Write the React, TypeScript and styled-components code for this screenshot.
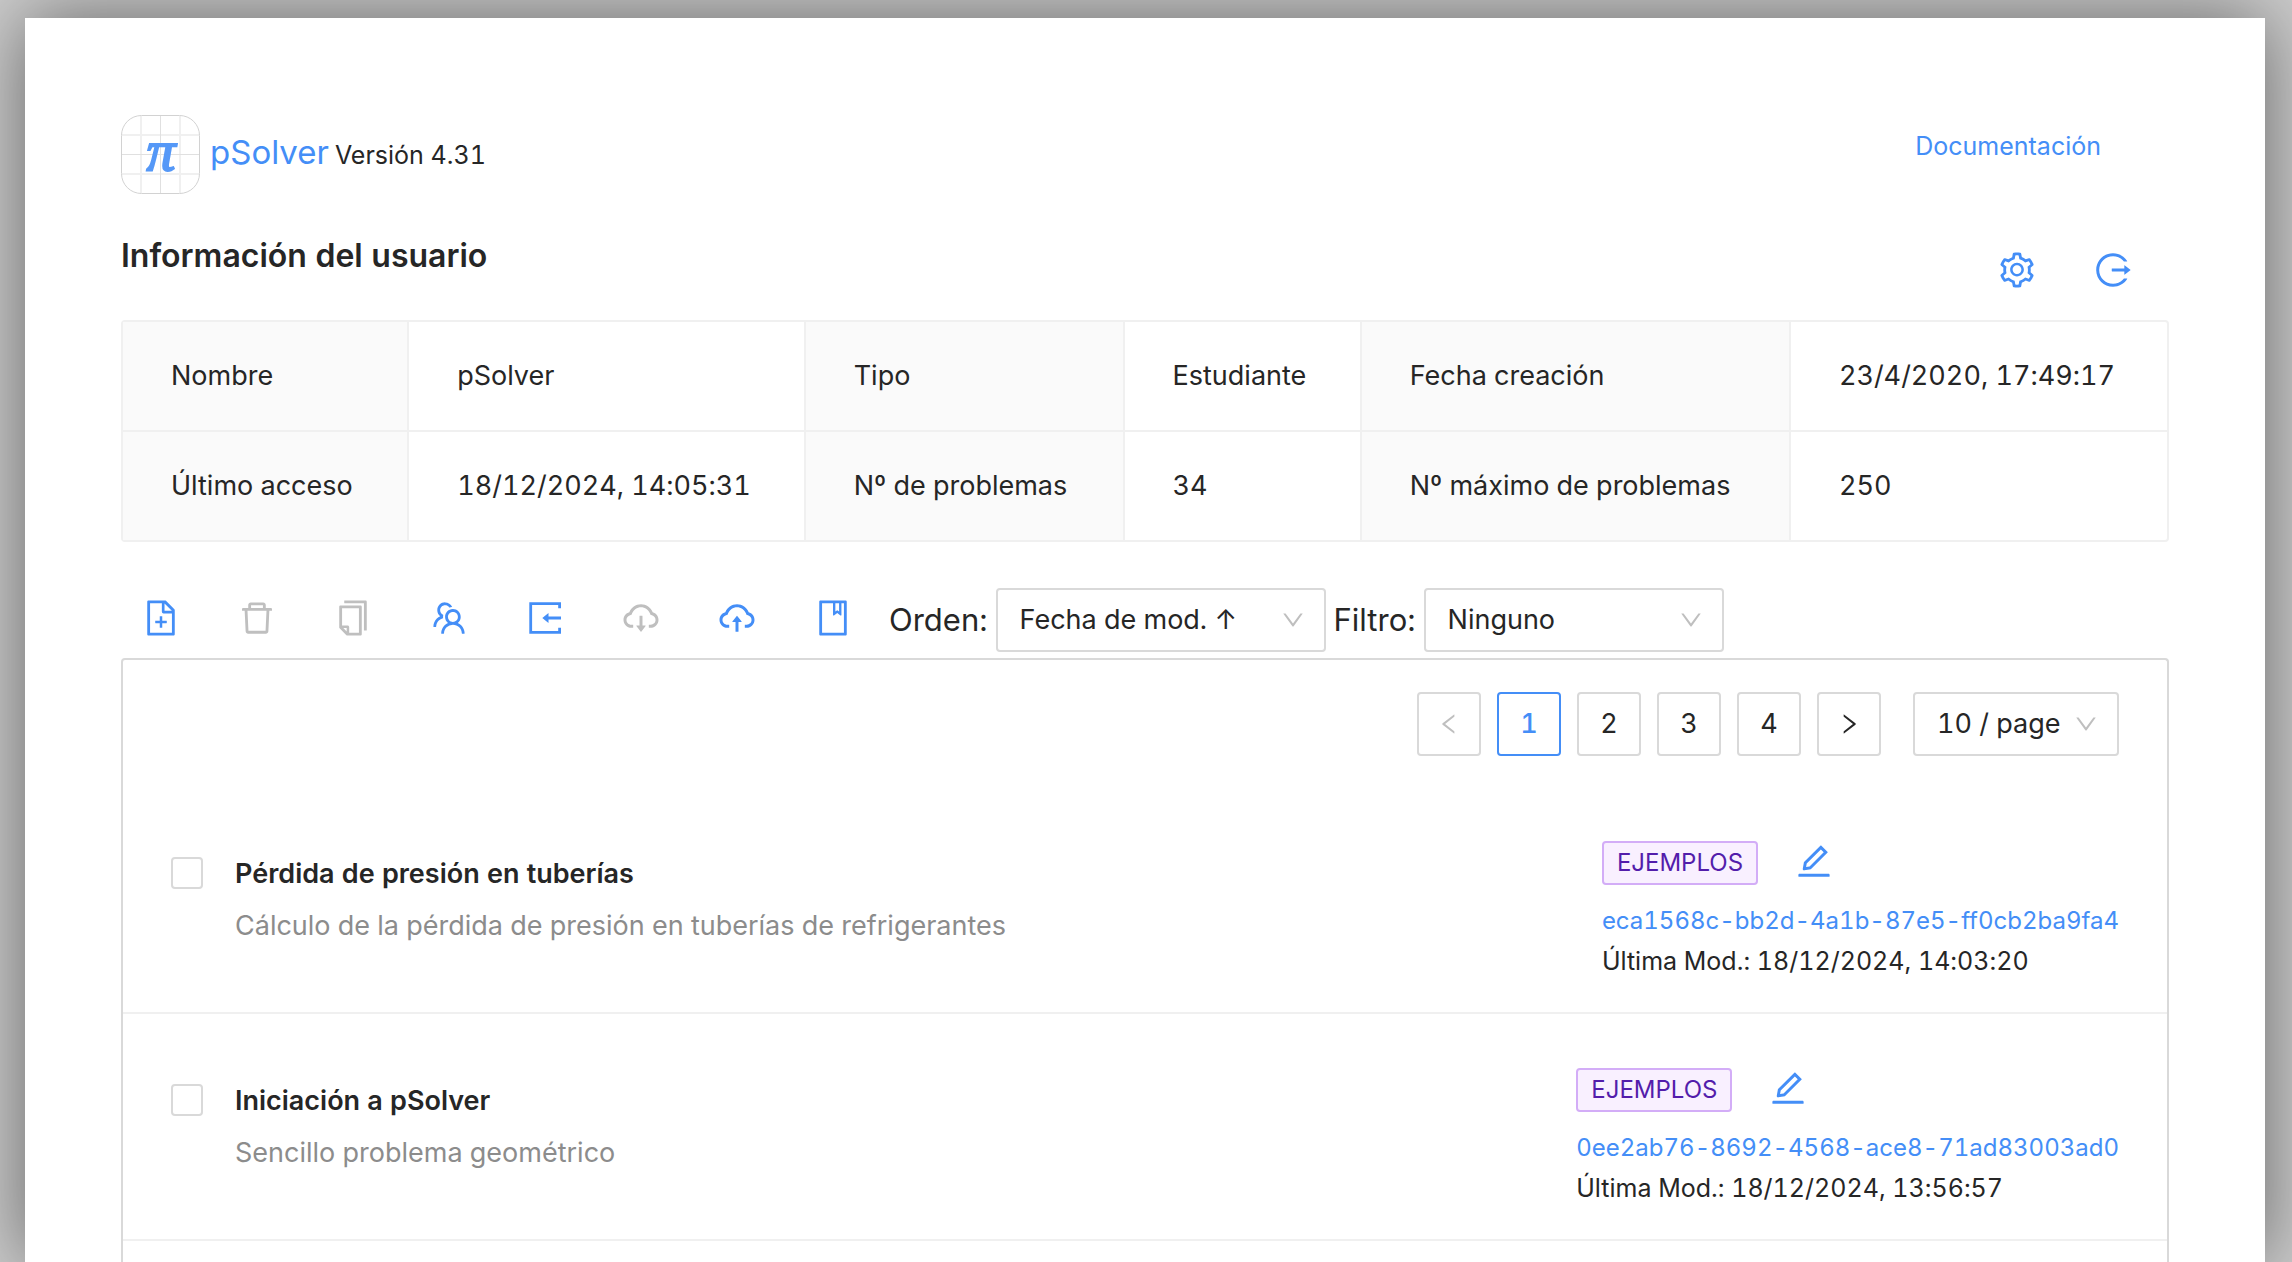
import React from "react";
import styled, { createGlobalStyle } from "styled-components";
import {
  AiOutlineBook,
  AiOutlineCloudDownload,
  AiOutlineCloudUpload,
  AiOutlineCopy,
  AiOutlineDelete,
  AiOutlineDown,
  AiOutlineEdit,
  AiOutlineFileAdd,
  AiOutlineLeft,
  AiOutlineLogout,
  AiOutlineRight,
  AiOutlineSetting,
  AiOutlineTeam,
} from "react-icons/ai";

const color = {
  primary: "#448ef7",
  text: "#262626",
  muted: "#8c8c8c",
  disabled: "#bfbfbf",
  border: "#d9d9d9",
  split: "#f0f0f0",
};

const GlobalStyle = createGlobalStyle`
  *, *::before, *::after { box-sizing: border-box; }
  body {
    margin: 0;
    background: #cccccc;
    color: ${color.text};
    font-family: Inter, "Liberation Sans", sans-serif;
    font-size: 27px;
    line-height: 44px;
    font-variant-numeric: tabular-nums;
    font-variant-ligatures: no-contextual;
  }
  button, input, select { font: inherit; color: inherit; }
`;

const Page = styled.div`
  display: flex;
  flex-direction: column;
  height: 100vh;
  padding: 18px 27px 0 25px;
  overflow: hidden;
`;

const Sheet = styled.main`
  display: flex;
  flex: 1;
  flex-direction: column;
  padding: 97px 96px 0;
  background: #ffffff;
  box-shadow: 0 0 72px rgba(0, 0, 0, 0.5);
`;

const Header = styled.header`
  display: flex;
  justify-content: space-between;
  align-items: flex-start;
  height: 79px;
`;

const Brand = styled.div`
  display: flex;
  align-items: center;
  gap: 10px;
`;

const BrandName = styled.div`
  display: flex;
  align-items: baseline;
  gap: 6px;
  padding-bottom: 2px;
  font-size: 25px;
`;

const BrandLink = styled.a`
  color: ${color.primary};
  font-size: 33px;
  text-decoration: none;
`;

const DocsLink = styled.a`
  margin: 9px 68px 0 0;
  color: ${color.primary};
  font-size: 25px;
  text-decoration: none;
`;

const TitleBar = styled.div`
  display: flex;
  justify-content: space-between;
  align-items: flex-start;
  margin-top: 38px;
  height: 88px;
`;

const Title = styled.h1`
  margin: 0;
  font-size: 32px;
  line-height: 48px;
  font-weight: 600;
`;

const AccountActions = styled.div`
  display: flex;
  gap: 56px;
  padding: 18px 36px 0 0;
`;

const IconButton = styled.button`
  display: flex;
  padding: 0;
  border: 0;
  background: none;
  color: ${color.primary};
  font-size: 40px;
  line-height: 1;
  cursor: pointer;

  &:disabled {
    color: ${color.disabled};
    cursor: not-allowed;
  }
`;

const InfoTable = styled.table`
  width: 100%;
  border: 2px solid ${color.split};
  border-radius: 4px;
  border-spacing: 0;
  table-layout: fixed;

  tr + tr > * { border-top: 2px solid ${color.split}; }
`;

const Col = styled.col<{ $share: number }>`
  width: ${(p) => p.$share}%;
`;

const LabelCell = styled.th`
  box-sizing: content-box;
  height: 108px;
  padding: 0 0 0 48px;
  border-right: 2px solid ${color.split};
  background: #fafafa;
  font-weight: 400;
  text-align: left;
  white-space: nowrap;
`;

const ValueCell = styled.td`
  padding: 0 0 0 48px;
  border-right: 2px solid ${color.split};
  white-space: nowrap;

  &:last-child { border-right: 0; }
`;

const Toolbar = styled.div`
  display: flex;
  align-items: center;
  margin-top: 46px;
  padding-left: 20px;
`;

const ToolGroup = styled.div`
  display: flex;
  gap: 56px;
  margin: 0 36px 4px 0;
`;

const ToolLabel = styled.label`
  margin-right: 8px;
  font-size: 31px;
`;

const SelectBox = styled.div<{ $width: number }>`
  position: relative;
  width: ${(p) => p.$width}px;

  select {
    display: block;
    width: 100%;
    height: 64px;
    padding: 0 22px;
    border: 2px solid ${color.border};
    border-radius: 4px;
    background: #ffffff;
    appearance: none;
  }

  svg {
    position: absolute;
    top: 19px;
    right: 20px;
    color: ${color.disabled};
    font-size: 26px;
    pointer-events: none;
  }

  & + label { margin-left: 8px; }
`;

const Panel = styled.section`
  flex: 1;
  margin-top: 6px;
  border: 2px solid ${color.border};
  border-bottom: 0;
  border-radius: 4px 4px 0 0;
`;

const Pagination = styled.nav`
  display: flex;
  justify-content: flex-end;
  gap: 16px;
  padding: 32px 48px 31px;
`;

const PageButton = styled.button<{ $active?: boolean }>`
  display: flex;
  justify-content: center;
  align-items: center;
  width: 64px;
  height: 64px;
  padding: 0;
  border: 2px solid ${(p) => (p.$active ? color.primary : color.border)};
  border-radius: 4px;
  background: #ffffff;
  color: ${(p) => (p.$active ? color.primary : color.text)};
  font-weight: ${(p) => (p.$active ? 500 : 400)};
  cursor: pointer;

  &:disabled { color: ${color.disabled}; }
  svg { font-size: 26px; }
`;

const PageSize = styled.div`
  margin-left: 16px;
`;

const List = styled.ul`
  margin: 0;
  padding: 0;
  list-style: none;
`;

const Item = styled.li`
  display: flex;
  align-items: flex-start;
  gap: 32px;
  height: 227px;
  padding: 54px 48px 0;
  border-bottom: 2px solid ${color.split};
`;

const Checkbox = styled.input`
  flex: none;
  width: 32px;
  height: 32px;
  margin: 16px 0 0;
  border: 2px solid ${color.border};
  border-radius: 4px;
  background: #ffffff;
  appearance: none;

  &:checked { background: ${color.primary}; }
`;

const ItemText = styled.div`
  flex: 1;
  padding-top: 11px;
`;

const ItemTitle = styled.label`
  display: block;
  margin-bottom: 8px;
  font-weight: 600;
`;

const ItemDescription = styled.p`
  margin: 0;
  color: ${color.muted};
`;

const ItemMeta = styled.div`
  font-size: 25px;
  line-height: 40px;
`;

const TagRow = styled.div`
  display: flex;
  align-items: flex-start;
  gap: 36px;
  margin-bottom: 16px;
`;

const Tag = styled.span`
  height: 44px;
  padding: 0 13px;
  border: 2px solid #d3adf7;
  border-radius: 4px;
  background: #f9f0ff;
  color: #531dab;
  font-size: 24px;
`;

const IdLink = styled.a`
  display: block;
  color: ${color.primary};
  font-size: 24px;
  text-decoration: none;
`;

const Logo = () => (
  <svg width="79" height="79" viewBox="0 0 79 79" aria-hidden="true">
    <path d="M20 1v77M59 1v77M1 20h77M1 59h77" fill="none" stroke="#f0f0f0" strokeWidth="2" />
    <path d="M39.5 1v77M1 39.5h77" fill="none" stroke="#e0e0e0" />
    <rect x="0.5" y="0.5" width="78" height="78" rx="20" fill="none" stroke="#d2d2d2" />
    <text
      x="40"
      y="55"
      textAnchor="middle"
      fontFamily="Liberation Serif, serif"
      fontSize="58"
      fontStyle="italic"
      fill="#5598f7"
      stroke="#5598f7"
      strokeWidth="2"
    >
      π
    </text>
  </svg>
);

/* A frame open on its right side with an arrow pointing into it. */
const ImportIcon = () => (
  <svg width="1em" height="1em" viewBox="0 0 40 40" aria-hidden="true">
    <path
      d="M34.6 10.3V5.7H5.7v28.6h28.9v-4.6M36 20H22"
      fill="none"
      stroke="currentColor"
      strokeWidth="2.8"
    />
    <path d="M17.3 20l6.2-5v10z" fill="currentColor" />
  </svg>
);

const userInfo = [
  [
    ["Nombre", "pSolver"],
    ["Tipo", "Estudiante"],
    ["Fecha creación", "23/4/2020, 17:49:17"],
  ],
  [
    ["Último acceso", "18/12/2024, 14:05:31"],
    ["Nº de problemas", "34"],
    ["Nº máximo de problemas", "250"],
  ],
];

const columnShares = [14, 19.4, 15.6, 11.6, 21, 18.4];

const tools = [
  { label: "Nuevo", Icon: AiOutlineFileAdd },
  { label: "Eliminar", Icon: AiOutlineDelete, disabled: true },
  { label: "Duplicar", Icon: AiOutlineCopy, disabled: true },
  { label: "Compartir", Icon: AiOutlineTeam },
  { label: "Importar", Icon: ImportIcon },
  { label: "Descargar", Icon: AiOutlineCloudDownload, disabled: true },
  { label: "Subir", Icon: AiOutlineCloudUpload },
  { label: "Referencias", Icon: AiOutlineBook },
];

const problems = [
  {
    id: "eca1568c-bb2d-4a1b-87e5-ff0cb2ba9fa4",
    title: "Pérdida de presión en tuberías",
    description: "Cálculo de la pérdida de presión en tuberías de refrigerantes",
    tag: "EJEMPLOS",
    modified: "18/12/2024, 14:03:20",
  },
  {
    id: "0ee2ab76-8692-4568-ace8-71ad83003ad0",
    title: "Iniciación a pSolver",
    description: "Sencillo problema geométrico",
    tag: "EJEMPLOS",
    modified: "18/12/2024, 13:56:57",
  },
];

export default function App() {
  return (
    <>
      <GlobalStyle />
      <Page>
        <Sheet>
          <Header>
            <Brand>
              <Logo />
              <BrandName>
                <BrandLink href="#inicio">pSolver</BrandLink>
                <span>Versión 4.31</span>
              </BrandName>
            </Brand>
            <DocsLink href="#documentacion">Documentación</DocsLink>
          </Header>

          <TitleBar>
            <Title>Información del usuario</Title>
            <AccountActions>
              <IconButton type="button" aria-label="Ajustes">
                <AiOutlineSetting />
              </IconButton>
              <IconButton type="button" aria-label="Salir">
                <AiOutlineLogout />
              </IconButton>
            </AccountActions>
          </TitleBar>

          <InfoTable>
            <colgroup>
              {columnShares.map((share, i) => (
                <Col key={i} $share={share} />
              ))}
            </colgroup>
            <tbody>
              {userInfo.map((row, i) => (
                <tr key={i}>
                  {row.map(([label, value]) => (
                    <React.Fragment key={label}>
                      <LabelCell scope="row">{label}</LabelCell>
                      <ValueCell>{value}</ValueCell>
                    </React.Fragment>
                  ))}
                </tr>
              ))}
            </tbody>
          </InfoTable>

          <Toolbar>
            <ToolGroup>
              {tools.map(({ label, Icon, disabled }) => (
                <IconButton key={label} type="button" aria-label={label} disabled={disabled}>
                  <Icon />
                </IconButton>
              ))}
            </ToolGroup>
            <ToolLabel htmlFor="order">Orden:</ToolLabel>
            <SelectBox $width={330}>
              <select id="order">
                <option>Fecha de mod. ↑</option>
              </select>
              <AiOutlineDown />
            </SelectBox>
            <ToolLabel htmlFor="filter">Filtro:</ToolLabel>
            <SelectBox $width={300}>
              <select id="filter">
                <option>Ninguno</option>
              </select>
              <AiOutlineDown />
            </SelectBox>
          </Toolbar>

          <Panel>
            <Pagination aria-label="Páginas">
              <PageButton type="button" aria-label="Anterior" disabled>
                <AiOutlineLeft />
              </PageButton>
              {[1, 2, 3, 4].map((n) => (
                <PageButton key={n} type="button" $active={n === 1}>
                  {n}
                </PageButton>
              ))}
              <PageButton type="button" aria-label="Siguiente">
                <AiOutlineRight />
              </PageButton>
              <PageSize>
                <SelectBox $width={206}>
                  <select aria-label="Problemas por página">
                    <option>10 / page</option>
                  </select>
                  <AiOutlineDown />
                </SelectBox>
              </PageSize>
            </Pagination>

            <List>
              {problems.map((problem) => (
                <Item key={problem.id}>
                  <Checkbox type="checkbox" id={problem.id} />
                  <ItemText>
                    <ItemTitle htmlFor={problem.id}>{problem.title}</ItemTitle>
                    <ItemDescription>{problem.description}</ItemDescription>
                  </ItemText>
                  <ItemMeta>
                    <TagRow>
                      <Tag>{problem.tag}</Tag>
                      <IconButton type="button" aria-label="Editar etiquetas">
                        <AiOutlineEdit />
                      </IconButton>
                    </TagRow>
                    <IdLink href={`#${problem.id}`}>{problem.id}</IdLink>
                    <div>Última Mod.: {problem.modified}</div>
                  </ItemMeta>
                </Item>
              ))}
            </List>
          </Panel>
        </Sheet>
      </Page>
    </>
  );
}
